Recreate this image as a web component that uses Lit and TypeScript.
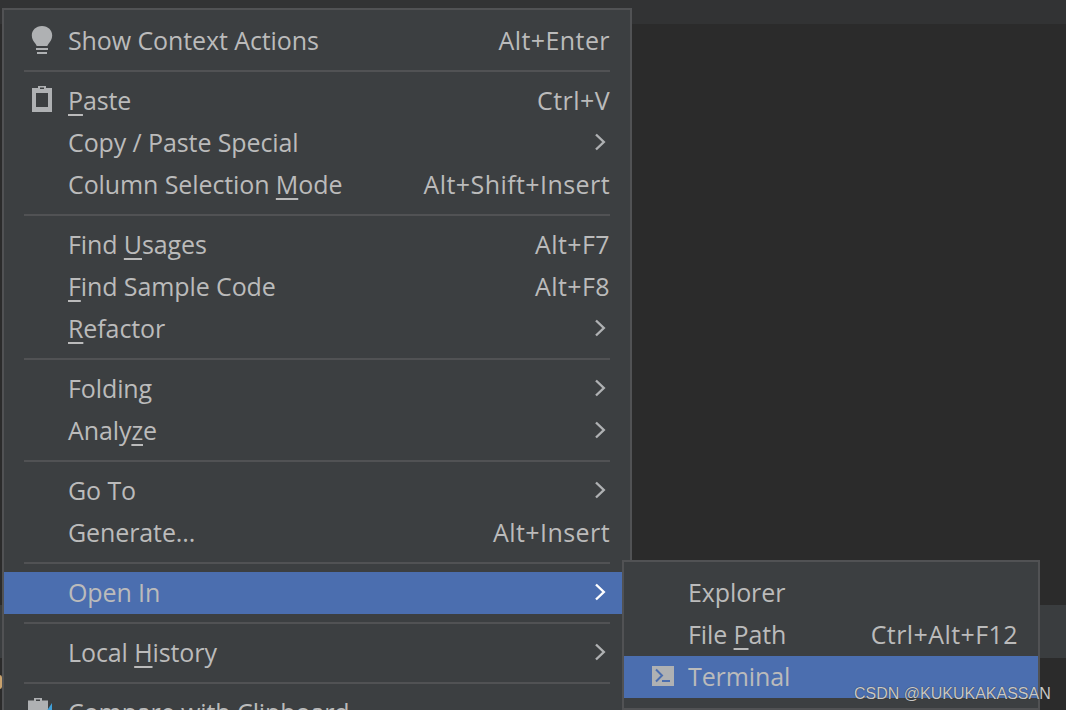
import { LitElement, html, css, nothing } from "lit";
import { customElement } from "lit/decorators.js";

type Row = { label: string; u?: string; key?: string; sub?: boolean; icon?: string; active?: boolean } | "sep";

const rows: Row[] = [
  { label: "Show Context Actions", key: "Alt+Enter", icon: "bulb" },
  "sep",
  { label: "Paste", u: "P", key: "Ctrl+V", icon: "paste" },
  { label: "Copy / Paste Special", sub: true },
  { label: "Column Selection Mode", u: "M", key: "Alt+Shift+Insert" },
  "sep",
  { label: "Find Usages", u: "U", key: "Alt+F7" },
  { label: "Find Sample Code", u: "F", key: "Alt+F8" },
  { label: "Refactor", u: "R", sub: true },
  "sep",
  { label: "Folding", sub: true },
  { label: "Analyze", u: "z", sub: true },
  "sep",
  { label: "Go To", sub: true },
  { label: "Generate...", key: "Alt+Insert" },
  "sep",
  { label: "Open In", sub: true, active: true },
  "sep",
  { label: "Local History", u: "H", sub: true },
  "sep",
  { label: "Compare with Clipboard", icon: "compare" },
];

const subRows: Row[] = [
  { label: "Explorer" },
  { label: "File Path", u: "P", key: "Ctrl+Alt+F12" },
  { label: "Terminal", icon: "terminal", active: true },
];

const icons: Record<string, unknown> = {
  bulb: html`<svg width="24" height="30" viewBox="0 0 24 30"><path fill="#afb1b3" d="M12 3C5.800 3 1.800 7.300 1.800 12.400c0 3.800 2 6 3.500 8 .8 1 1.200 1.800 1.400 2.600h10.600c.2-.8.6-1.600 1.400-2.600 1.500-2 3.500-4.200 3.500-8C22.200 7.300 18.200 3 12 3z"/><rect fill="#afb1b3" x="6" y="25" width="12" height="2"/><rect fill="#afb1b3" x="7" y="29" width="10" height="2"/></svg>`,
  paste: html`<svg width="24" height="28" viewBox="0 0 24 28"><path fill="#afb1b3" fill-rule="evenodd" d="M2 4h6V2h8v2h6v24H2zM6 9v14h12V9z"/><rect fill="#3c3f41" x="10" y="3.500" width="4" height="1.500"/></svg>`,
  compare: html`<svg width="26" height="30" viewBox="0 0 26 30"><path fill="#afb1b3" fill-rule="evenodd" d="M-2 5.500h6V3h8v2.500h6V29H-2z"/><rect fill="#3c3f41" x="6" y="4.500" width="4" height="1.500"/><path fill="#40a0d8" d="M22 8v12H14z"/></svg>`,
  terminal: html`<svg width="22" height="20" viewBox="0 0 22 20"><rect fill="#afb1b3" width="22" height="20"/><path fill="none" stroke="#4b6eaf" stroke-width="2" d="M4 3.500l6 6-6 6"/><rect fill="#4b6eaf" x="10" y="14" width="8" height="2"/></svg>`,
};

@customElement("app-root")
export class AppRoot extends LitElement {
  static styles = css`
    :host {
      display: block;
      position: relative;
      width: 1066px;
      height: 710px;
      overflow: hidden;
      background: #2b2b2b;
      font-family: "Open Sans", "Noto Sans", sans-serif;
      font-size: 25px;
      color: #bbbbbb;
    }
    .topbar { height: 24px; background: #323334; }
    .editor { height: 581px; background: #2b2b2b; }
    .band { height: 53px; background: #3a3d3f; }
    .tick {
      position: absolute;
      left: -3px;
      top: 675px;
      width: 5px;
      height: 14px;
      border-radius: 3px;
      background: #c9a26d;
    }
    .menu {
      position: absolute;
      box-sizing: border-box;
      background: #3c3f41;
      border: 2px solid #515254;
      padding: 10px 0;
    }
    .main { left: 2px; top: 8px; width: 630px; }
    .sub { left: 622px; top: 560px; width: 418px; }
    .row {
      height: 42px;
      display: flex;
      align-items: center;
      box-sizing: border-box;
      padding: 0 0 3px 64px;
      white-space: nowrap;
      position: relative;
    }
    .row.active { background: #4b6eaf; }
    .label { flex: 1; letter-spacing: -0.1px; }
    .key { margin-right: 20px; letter-spacing: 0.42px; }
    .u {
      text-decoration: underline;
      text-decoration-thickness: 2px;
      text-underline-offset: 4px;
    }
    .chev { margin-right: 24px; display: flex; }
    .icon {
      position: absolute;
      left: 26px;
      top: 0;
      height: 100%;
      display: flex;
      align-items: center;
      margin-top: -3px;
    }
    .icon svg { overflow: visible; }
    .sub .icon { left: 28px; margin-top: -1px; }
    .sep { height: 2px; background: #515254; margin: 8px 20px; }
    .mark {
      position: absolute;
      left: 854px;
      top: 684px;
      font-family: "Liberation Sans", sans-serif;
      font-size: 16px;
      line-height: 20px;
      color: #c8c8c8;
      text-shadow: 0 0 1px #222;
    }
  `;

  private label(r: Exclude<Row, "sep">) {
    if (!r.u) return r.label;
    const i = r.label.indexOf(r.u);
    return html`${r.label.slice(0, i)}<span class="u">${r.u}</span>${r.label.slice(i + 1)}`;
  }

  private renderRows(list: Row[]) {
    return list.map((r) =>
      r === "sep"
        ? html`<div class="sep"></div>`
        : html`<div class="row ${r.active ? "active" : ""}">
            ${r.icon ? html`<span class="icon">${icons[r.icon]}</span>` : nothing}
            <span class="label">${this.label(r)}</span>
            ${r.key ? html`<span class="key">${r.key}</span>` : nothing}
            ${r.sub
              ? html`<span class="chev"><svg width="14" height="22" viewBox="0 0 14 22"><path fill="none" stroke="${r.active ? "#ffffff" : "#afb1b3"}" stroke-width="2.400" d="M4 3.500L11.800 11L4 18.500"/></svg></span>`
              : nothing}
          </div>`
    );
  }

  render() {
    return html`
      <div class="topbar"></div>
      <div class="editor"></div>
      <div class="band"></div>
      <div class="tick"></div>
      <div class="menu main">${this.renderRows(rows)}</div>
      <div class="menu sub">${this.renderRows(subRows)}</div>
      <div class="mark">CSDN @KUKUKAKASSAN</div>
    `;
  }
}
